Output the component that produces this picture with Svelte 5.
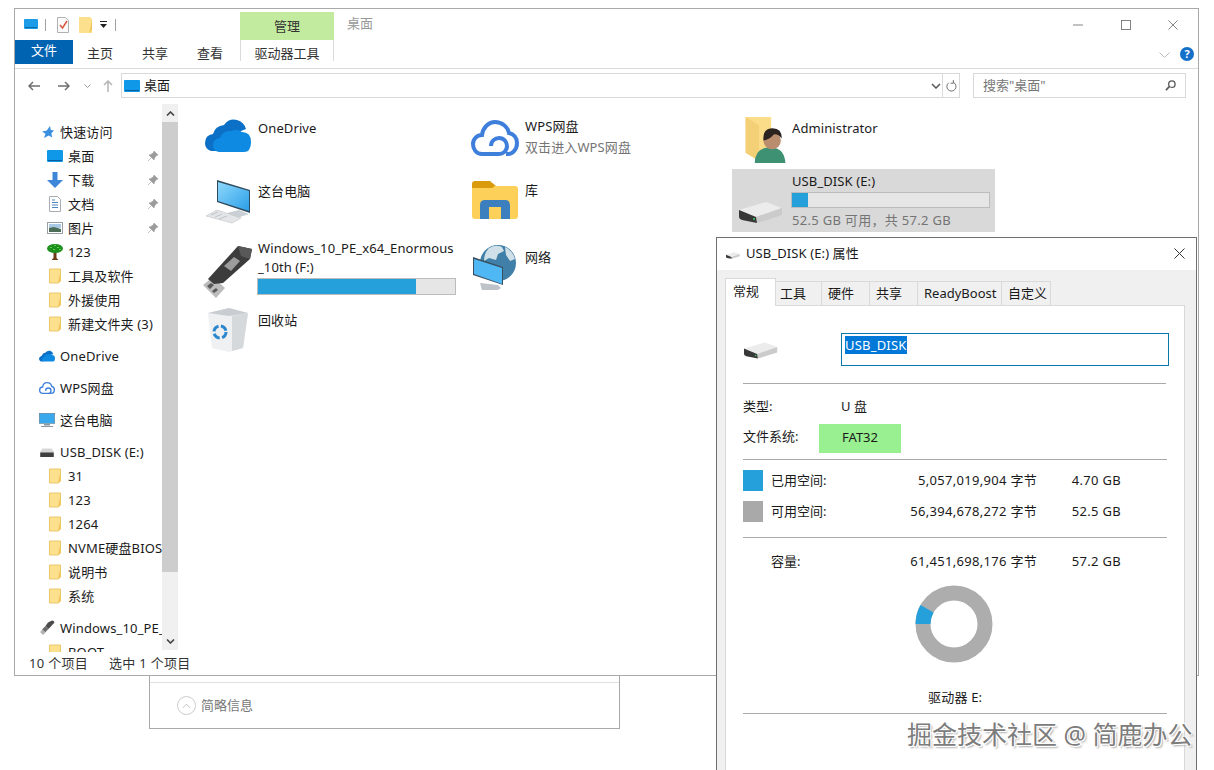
<script>
	const navGroups = [
		[
			{ name: '快速访问', icon: 'star', top: true },
			{ name: '桌面', icon: 'desktop', pin: true },
			{ name: '下载', icon: 'down', pin: true },
			{ name: '文档', icon: 'doc', pin: true },
			{ name: '图片', icon: 'pic', pin: true },
			{ name: '123', icon: 'tree' },
			{ name: '工具及软件', icon: 'folder' },
			{ name: '外援使用', icon: 'folder' },
			{ name: '新建文件夹 (3)', icon: 'folder' }
		],
		[{ name: 'OneDrive', icon: 'onedrive', top: true }],
		[{ name: 'WPS网盘', icon: 'wps', top: true }],
		[{ name: '这台电脑', icon: 'pc', top: true }],
		[
			{ name: 'USB_DISK (E:)', icon: 'drive', top: true },
			{ name: '31', icon: 'folder' },
			{ name: '123', icon: 'folder' },
			{ name: '1264', icon: 'folder' },
			{ name: 'NVME硬盘BIOS', icon: 'folder' },
			{ name: '说明书', icon: 'folder' },
			{ name: '系统', icon: 'folder' }
		],
		[
			{ name: 'Windows_10_PE_x64_Enormous', icon: 'usb', top: true },
			{ name: 'BOOT', icon: 'folder' }
		]
	];

	const tabs = ['常规', '工具', '硬件', '共享', 'ReadyBoost', '自定义'];

	const used = 5057019904;
	const total = 61451698176;
	const radius = 31;
	const circ = 2 * Math.PI * radius;
	const usedLen = (used / total) * circ;

	// CJK glyphs sit a little low in the line box
	const hasCjk = (s) => /[\u4e00-\u9fff]/.test(s);
</script>

{#snippet folder()}
	<svg class="i16" viewBox="0 0 16 16">
		<path d="M2.500 1h11v12l-2 2h-9z" fill="#fde08d" stroke="#ecc868" stroke-width="1" />
		<path d="M11 15l2.500-2V6l-1.500 3z" fill="#f1c65c" />
	</svg>
{/snippet}

{#snippet desktop()}
	<svg class="i16" viewBox="0 0 16 14">
		<rect x="0" y="1" width="16" height="12" rx="1" fill="#0f97e8" />
		<rect x="1" y="11" width="14" height="1" fill="#0a5d99" />
	</svg>
{/snippet}

{#snippet drive(cls)}
	<svg class={cls} viewBox="0 0 44 21">
		<path d="M0 8L27 0l16 6-26 9z" fill="#ececec" />
		<path d="M17 15L43 6v7L18 21z" fill="#cbcbcb" />
		<path d="M0 8l17 7 1 6-15-3q-3-1-3-3z" fill="#383838" />
		<circle cx="15" cy="17" r="1" fill="#3bcf6b" />
	</svg>
{/snippet}

{#snippet wpsCloud(cls)}
	<svg class={cls} viewBox="0 0 48 36">
		<path d="M20 26C20 21 24 18 28 18C33 18 36 22 36 26C36 31 32 34 28 34H11C5 34 2 29 2 24C2 19 6 15 11 15C12 7 18 2 24 2C31 2 37 7 38 13C43 14 46 18 46 23C46 29 42 34 37 34H35" fill="none" stroke="#3f7fdc" stroke-width="4" />
	</svg>
{/snippet}

{#snippet navIcon(name)}
	{#if name === 'star'}
		<svg class="i16" viewBox="0 0 16 16"><path d="M11 2l.8 4 3.200.6-2.600 2.600.8 4.300-3.400-2-4.800 2.500 1.500-4.300L3 7.500l4.800-1z" fill="#3a8ee0" /></svg>
	{:else if name === 'desktop'}
		{@render desktop()}
	{:else if name === 'down'}
		<svg class="i16" viewBox="0 0 16 16"><path d="M5.500 0h5v8H16l-8 8-8-8h5.500z" fill="#3d86d8" /></svg>
	{:else if name === 'doc'}
		<svg class="i16" viewBox="0 0 16 16">
			<path d="M2.500.5h8l3 3v12h-11z" fill="#fff" stroke="#a8adb3" />
			<path d="M5 4h3M5 6.500h6M5 9h6M5 11.500h6" stroke="#4a86c0" stroke-width="1" />
		</svg>
	{:else if name === 'pic'}
		<svg class="i16" viewBox="0 0 16 14">
			<rect x=".5" y="1.500" width="15" height="11" fill="#fff" stroke="#9a9fa6" />
			<rect x="2" y="3" width="12" height="4" fill="#a9c9e4" />
			<path d="M2 7l5-1 7 2v3H2z" fill="#4c6d58" />
		</svg>
	{:else if name === 'tree'}
		<svg class="i16" viewBox="0 0 16 16">
			<path d="M6.500 7h3v7l2 2h-7l2-2z" fill="#6b3a17" />
			<ellipse cx="8" cy="4.500" rx="8" ry="4.500" fill="#1c8f1c" />
			<path d="M3 3h2v1H3zm4-2h2v1H7zm3 2h2v1h-2zM6 5h2v1H6zM12 5h2v1h-2z" fill="#67d04a" />
		</svg>
	{:else if name === 'folder'}
		{@render folder()}
	{:else if name === 'onedrive'}
		<svg class="i16" viewBox="0 0 46 34">
			<path d="M5 33Q0 30 0 25q0-7 8-9 2-8 11-9 5-7 13-5 7 2 9 9l-20 8-8 14z" fill="#0b70c6" />
			<path d="M14 33q-6 0-6-6t7-7q3-8 12-7 4-3 10 1 9 0 9 10 0 9-7 9z" fill="#0f8ae2" />
		</svg>
	{:else if name === 'wps'}
		{@render wpsCloud('i16')}
	{:else if name === 'pc'}
		<svg class="i16" viewBox="0 0 16 14">
			<rect x=".3" y=".3" width="15.400" height="10" fill="#39a9ee" stroke="#5d7a8e" stroke-width=".6" />
			<path d="M5 11h6v1.500H5zM2 13h12v1H2z" fill="#8a97a2" />
		</svg>
	{:else if name === 'drive'}
		<svg class="i16" viewBox="0 0 14 8" style="height:9px"><path d="M1 3l2-2.500h8L13 3v5H1z" fill="#d7d7d7" /><rect x="1" y="4" width="12" height="4" fill="#3f3f3f" /></svg>
	{:else if name === 'usb'}
		<svg class="i16" viewBox="0 0 16 16">
			<path d="M9 2.500l4-2q2 0 2.500 2L9.500 9 6.500 6z" fill="#4b4b4b" />
			<path d="M6.500 6l3 3-3.500 3.500-3-3z" fill="#6c6c6c" />
			<path d="M3.500 9.500l3 3L4 15l-3-3z" fill="#b3b3b3" />
		</svg>
	{/if}
{/snippet}

<div class="back-dialog">
	<div class="back-foot">
		<span class="circle-up">
			<svg viewBox="0 0 10 6" width="9" height="6"><path d="M1 5l4-4 4 4" fill="none" stroke="#bbb" /></svg>
		</span>
		<span class="up2">简略信息</span>
	</div>
</div>

<div class="window">
	<header class="titlebar">
		<div class="qat">
			<svg class="q-desk" viewBox="0 0 14 11"><rect width="14" height="10" rx="1" fill="#1c9be6" /><rect x="1" y="8" width="12" height="1" fill="#0c6cb0" /></svg>
			<span class="q-sep"></span>
			<svg class="q-doc" viewBox="0 0 12 16">
				<path d="M.5.500h8l3 3v12H.5z" fill="#fafafa" stroke="#b0b0b0" />
				<path d="M3 8l2.500 3L10 4" fill="none" stroke="#d8563e" stroke-width="1.500" />
			</svg>
			<svg class="q-folder" viewBox="0 0 13 16"><path d="M0 0h11l2 2v14H0z" fill="#fde08d" /><path d="M10 16l3-3V3z" fill="#f1c65c" /></svg>
			<svg class="q-drop" viewBox="0 0 7 8"><path d="M0 0h7v1H0z" fill="#222" /><path d="M0 3h7L3.500 7z" fill="#222" /></svg>
			<span class="q-sep last"></span>
		</div>
		<div class="context">管理</div>
		<div class="win-title">桌面</div>
		<div class="controls">
			<span class="ctrl"><svg viewBox="0 0 11 11" width="10" height="10"><path d="M0 5.500h11" stroke="#777" /></svg></span>
			<span class="ctrl"><svg viewBox="0 0 11 11" width="10" height="10"><rect x=".5" y=".5" width="10" height="10" fill="none" stroke="#777" /></svg></span>
			<span class="ctrl"><svg viewBox="0 0 11 11" width="10" height="10"><path d="M.5.500l10 10M10.500.5l-10 10" stroke="#777" /></svg></span>
		</div>
	</header>

	<nav class="ribbon">
		<span class="file-tab">文件</span>
		<span class="tab">主页</span>
		<span class="tab">共享</span>
		<span class="tab">查看</span>
		<span class="tool-tab">驱动器工具</span>
		<svg class="collapse" viewBox="0 0 11 6" width="11" height="6"><path d="M.5.500l5 5 5-5" fill="none" stroke="#bbb" /></svg>
		<span class="help">?</span>
	</nav>

	<div class="addr-row">
		<svg class="arrow" viewBox="0 0 12 10" width="12" height="10"><path d="M12 5H1M5 1L1 5l4 4" fill="none" stroke="#6e6e6e" stroke-width="1.500" /></svg>
		<svg class="arrow fwd" viewBox="0 0 12 10" width="12" height="10"><path d="M0 5h11M7 1l4 4-4 4" fill="none" stroke="#6e6e6e" stroke-width="1.500" /></svg>
		<svg class="arrow small" viewBox="0 0 7 4" width="7" height="4"><path d="M.5.500l3 3 3-3" fill="none" stroke="#9a9a9a" /></svg>
		<svg class="arrow up" viewBox="0 0 10 12" width="10" height="12"><path d="M5 12V1M1 5l4-4 4 4" fill="none" stroke="#b5b5b5" stroke-width="1.500" /></svg>
		<div class="addr">
			{@render desktop()}
			<span class="addr-text up2">桌面</span>
			<svg class="addr-drop" viewBox="0 0 10 6" width="10" height="6"><path d="M1 1l4 4 4-4" fill="none" stroke="#555" stroke-width="1.500" /></svg>
			<span class="addr-refresh">
				<svg viewBox="0 0 12 13" width="11" height="12"><path d="M3 3a5 5 0 1 0 5-.5M8 0v3.500H5" fill="none" stroke="#666" /></svg>
			</span>
		</div>
		<div class="search">
			<span class="up2">搜索"桌面"</span>
			<svg viewBox="0 0 12 12" width="11" height="11"><circle cx="7.500" cy="4.500" r="3.500" fill="none" stroke="#555" stroke-width="1.400" /><path d="M5 7l-4 4" stroke="#555" stroke-width="1.800" /></svg>
		</div>
	</div>

	<div class="main">
		<aside class="nav">
			{#each navGroups as group}
				<div class="nav-group">
					{#each group as row}
						<div class="nav-row" class:top={row.top}>
							<span class="nav-icon">{@render navIcon(row.icon)}</span>
							<span class="nav-name" class:up2={hasCjk(row.name)}>{row.name}</span>
							{#if row.pin}
								<svg class="pin" viewBox="0 0 10 10" width="10" height="10"><path d="M6 0l4 4-1.500.5L6.500 7 6 9 1 4l2-.5L5.500 1.500zM3 7L0 10" fill="#9b9b9b" stroke="#9b9b9b" stroke-width=".6" /></svg>
							{/if}
						</div>
					{/each}
				</div>
			{/each}
		</aside>
		<div class="scrollbar">
			<span class="sb-btn"><svg viewBox="0 0 9 5" width="9" height="5"><path d="M1 4.500l3.500-3.500L8 4.500" fill="none" stroke="#444" stroke-width="1.600" /></svg></span>
			<span class="sb-thumb"></span>
			<span class="sb-rest"></span>
			<span class="sb-btn"><svg viewBox="0 0 9 5" width="9" height="5"><path d="M1 .5l3.500 3.500L8 .5" fill="none" stroke="#444" stroke-width="1.600" /></svg></span>
		</div>

		<section class="items">
			<div class="item">
				<svg class="big onedrive" viewBox="0 0 46 34">
					<path d="M6 33Q0 31 0 25q0-8 8-9 2-8 11-9 5-7 13-5 7 2 9 9l-20 8-8 14z" fill="#0b70c6" />
					<path d="M14 34q-6-1-6-7t7-7q3-8 12-7 4-3 10 1 9 0 9 10 0 10-7 10z" fill="#0f8ae2" />
				</svg>
				<div class="label">OneDrive</div>
			</div>
			<div class="item">
				{@render wpsCloud('big wps')}
				<div class="label tight">WPS网盘<small>双击进入WPS网盘</small></div>
			</div>
			<div class="item">
				<svg class="big admin" viewBox="0 0 40 46">
					<path d="M1 1h25v36L15 44 1 36z" fill="#fbdc88" />
					<path d="M1 1l13 8v35L1 36z" fill="#f3cf76" />
					<path d="M10 46q0-13 11-15h8q10 2 11 15z" fill="#3f9173" />
					<circle cx="27" cy="24" r="8.500" fill="#b98d6d" />
					<path d="M18.500 24q-1-12 9-12 9 0 9 10-4-5-8-4-4 5-10 6z" fill="#2a2320" />
				</svg>
				<div class="label">Administrator</div>
			</div>

			<div class="item">
				<svg class="big pc" viewBox="0 0 46 44">
					<defs>
						<linearGradient id="screen" x1="0" y1="0" x2="1" y2="1">
							<stop offset="0" stop-color="#8fd8fb" />
							<stop offset="1" stop-color="#2a9fe8" />
						</linearGradient>
					</defs>
					<path d="M22 33l12-3 10 4-12 4z" fill="#c9cfd4" />
					<path d="M12 0l33 10v23L12 22z" fill="#2f4a5c" />
					<path d="M13 2l31 9v20L13 21z" fill="url(#screen)" />
					<path d="M1 36l11-6 24 8-9 5z" fill="#e3e5e8" stroke="#c2c2c2" stroke-width=".6" />
					<path d="M6 35l7-3M10 37l7-3M14 39l8-3" stroke="#c2c5c8" stroke-width="1" />
				</svg>
				<div class="label">这台电脑</div>
			</div>
			<div class="item">
				<svg class="big lib" viewBox="0 0 46 38">
					<path d="M0 3q0-3 3-3h15l6 5v6H0z" fill="#d99a0b" />
					<path d="M0 7h20l3-2h20q3 0 3 3v27q0 3-3 3H3q-3 0-3-3z" fill="#fdd05a" />
					<path d="M8 38V24q0-5 5-5h20q5 0 5 5v14h-9V26H17v12z" fill="#3b7fbe" />
				</svg>
				<div class="label lib-label">库</div>
			</div>
			<div class="item selected">
				<span class="big drive-wrap">{@render drive('drive-big')}</span>
				<div class="label usage">
					USB_DISK (E:)
					<div class="bar"><span class="fill" style="width: {(used / total) * 100}%"></span></div>
					<small>52.5 GB 可用，共 57.2 GB</small>
				</div>
			</div>

			<div class="item">
				<svg class="big stick" viewBox="0 0 50 55">
					<path d="M0 42l10-8 12 11-9 10z" fill="#bcbcbc" />
					<path d="M4 43l4-3 3 2-4 4zM9 48l4-3 2 2-4 3z" fill="#5a5a5a" />
					<path d="M5 36L35 3l14 3-2 10-27 24-9 1z" fill="#3c3c3c" />
					<path d="M35 3l14 3-2 10-9-3z" fill="#585858" />
					<path d="M21 23l10-9 6 4-9 10z" fill="#9c9c9c" />
				</svg>
				<div class="label two-line">
					Windows_10_PE_x64_Enormous<br />_10th (F:)
					<div class="bar"><span class="fill" style="width: 80%"></span></div>
				</div>
			</div>
			<div class="item">
				<svg class="big net" viewBox="0 0 46 46">
					<circle cx="26" cy="19" r="18" fill="#3f7fa8" />
					<path d="M17 4q7-4 13-1l2 4-6 3-2 6-7-2-5 3q0-8 5-13zM33 3q8 4 10 12l-5 2-4-6z" fill="#cfe0e8" />
					<path d="M8 39l18 2 3 3-3 2H10z" fill="#bdc3c8" />
					<path d="M1 13l30 10v18L1 31z" fill="#3a4f5d" />
					<path d="M2 15l28 9v16L2 30z" fill="#50b7f5" />
				</svg>
				<div class="label low">网络</div>
			</div>
			<div class="item"></div>

			<div class="item">
				<svg class="big bin" viewBox="0 0 40 45">
					<path d="M0 6L21 1l19 5-5 35-14 4-17-4z" fill="#eef0f2" />
					<path d="M0 6L21 1l19 5-19 3z" fill="#c9cdd1" />
					<path d="M24 9l16-3-5 35-11 3z" fill="#d5d9dc" />
					<circle cx="12" cy="25" r="6" fill="none" stroke="#2d87cc" stroke-width="3" stroke-dasharray="7 2.500" />
				</svg>
				<div class="label">回收站</div>
			</div>
		</section>
	</div>

	<footer class="status">
		<span class="up2">10 个项目</span>
		<span class="up2">选中 1 个项目</span>
	</footer>
</div>

<div class="dialog">
	<div class="dlg-title">
		{@render drive('drive-mini')}
		<span class="title-text">USB_DISK (E:) 属性</span>
		<svg class="dlg-close" viewBox="0 0 11 11" width="11" height="11"><path d="M.5.500l10 10M10.500.5l-10 10" stroke="#333" /></svg>
	</div>
	<div class="dlg-tabs">
		{#each tabs as tab, i}
			<span class="dlg-tab" class:active={i === 0}>{tab}</span>
		{/each}
	</div>
	<div class="page">
		<div class="head">
			{@render drive('drive-dlg')}
			<div class="name-input"><span class="sel">USB_DISK</span></div>
		</div>
		<div class="meta">
			<div class="meta-row"><span>类型:</span><span class="meta-val">U 盘</span></div>
			<div class="meta-row fs"><span class="fs-label">文件系统:</span><span class="fat">FAT32</span></div>
		</div>
		<div class="space">
			<div class="space-row">
				<span class="swatch used"></span><span class="sp-label">已用空间:</span>
				<span class="num">5,057,019,904 字节</span><span class="num">4.70 GB</span>
			</div>
			<div class="space-row">
				<span class="swatch free"></span><span class="sp-label">可用空间:</span>
				<span class="num">56,394,678,272 字节</span><span class="num">52.5 GB</span>
			</div>
		</div>
		<div class="capacity">
			<div class="space-row cap">
				<span></span><span class="sp-label">容量:</span>
				<span class="num">61,451,698,176 字节</span><span class="num">57.2 GB</span>
			</div>
			<svg class="donut" viewBox="0 0 78 78" width="78" height="78">
				<circle cx="39" cy="39" r={radius} fill="none" stroke="#adadad" stroke-width="15" />
				<circle cx="39" cy="39" r={radius} fill="none" stroke="#26a0da" stroke-width="15"
					stroke-dasharray="{usedLen} {circ}" transform="rotate(180 39 39)" />
			</svg>
			<div class="drive-name">驱动器 E:</div>
		</div>
	</div>
</div>

<div class="watermark">掘金技术社区 @ 简鹿办公</div>

<style>
	:global(body) {
		background: #fff;
		overflow: hidden;
	}
	:global(#app) {
		position: relative;
		width: 1214px;
		height: 770px;
		overflow: hidden;
		font-family: "Noto Sans", "Noto Sans CJK SC", sans-serif;
		font-size: 13px;
		color: #1a1a1a;
	}
	svg {
		display: block;
		flex-shrink: 0;
	}
	.i16 {
		width: 16px;
		height: 16px;
	}
	.up2 {
		padding-bottom: 2px;
	}

	/* desktop windows */
	.window {
		position: absolute;
		left: 14px;
		top: 8px;
		width: 1185px;
		height: 668px;
		box-sizing: border-box;
		border: 1px solid #a9a9a9;
		background: #fff;
		display: flex;
		flex-direction: column;
	}
	.back-dialog {
		position: absolute;
		left: 149px;
		top: 660px;
		width: 471px;
		height: 69px;
		box-sizing: border-box;
		border: 1px solid #a9a9a9;
		background: #fff;
		display: flex;
		flex-direction: column;
		justify-content: flex-end;
	}
	.back-foot {
		height: 46px;
		box-sizing: border-box;
		border-top: 1px solid #dfdfdf;
		display: flex;
		align-items: center;
		gap: 5px;
		padding-left: 27px;
		color: #777;
	}
	.circle-up {
		width: 17px;
		height: 17px;
		border: 1px solid #ccc;
		border-radius: 50%;
		display: flex;
		align-items: center;
		justify-content: center;
	}

	/* title bar */
	.titlebar {
		height: 31px;
		display: flex;
		flex-shrink: 0;
	}
	.qat {
		width: 225px;
		flex-shrink: 0;
		display: flex;
		align-items: center;
		padding-left: 9px;
		box-sizing: border-box;
	}
	.q-desk {
		width: 14px;
		height: 11px;
	}
	.q-sep {
		width: 1px;
		height: 12px;
		background: #a0a0a0;
		margin: 0 11px 0 7px;
	}
	.q-sep.last {
		margin: 0 0 0 8px;
	}
	.q-doc {
		width: 12px;
		height: 16px;
		margin-right: 10px;
	}
	.q-folder {
		width: 13px;
		height: 16px;
		margin-right: 8px;
	}
	.q-drop {
		width: 7px;
		height: 8px;
	}
	.context {
		width: 94px;
		height: 28px;
		margin-top: 3px;
		background: #c3eb9f;
		text-align: center;
		line-height: 28px;
		color: #333;
		flex-shrink: 0;
	}
	.win-title {
		margin-left: 13px;
		line-height: 28px;
		color: #999;
	}
	.controls {
		margin-left: auto;
		margin-right: 1px;
		display: flex;
	}
	.ctrl {
		width: 47.500px;
		display: flex;
		align-items: center;
		justify-content: center;
	}

	/* ribbon */
	.ribbon {
		height: 29px;
		box-sizing: border-box;
		border-bottom: 1px solid #dadbdc;
		display: flex;
		align-items: flex-start;
		flex-shrink: 0;
	}
	.file-tab {
		width: 58px;
		height: 24px;
		background: #0063b1;
		color: #fff;
		text-align: center;
		line-height: 21px;
		flex-shrink: 0;
	}
	.tab {
		width: 54px;
		height: 24px;
		margin-right: 1px;
		text-align: center;
		line-height: 27px;
		color: #333;
		flex-shrink: 0;
	}
	.tool-tab {
		width: 94px;
		height: 21px;
		margin-left: 2px;
		box-sizing: border-box;
		border: 1px solid #dadbdc;
		border-width: 0 1px;
		text-align: center;
		line-height: 27px;
		color: #333;
		overflow: hidden;
	}
	.collapse {
		margin: 12px 0 0 auto;
	}
	.help {
		width: 14px;
		height: 14px;
		margin: 7px 4px 0 10px;
		border-radius: 50%;
		background: #1470c8;
		color: #fff;
		font-size: 11px;
		font-weight: 700;
		line-height: 14px;
		text-align: center;
	}

	/* address row */
	.addr-row {
		height: 35px;
		display: flex;
		align-items: center;
		padding-bottom: 2px;
		box-sizing: border-box;
		flex-shrink: 0;
	}
	.arrow {
		margin-left: 13px;
	}
	.arrow.fwd {
		margin-left: 18px;
	}
	.arrow.small {
		margin-left: 14px;
	}
	.arrow.up {
		margin-left: 12px;
	}
	.addr {
		width: 839px;
		height: 25px;
		margin-left: 8px;
		box-sizing: border-box;
		border: 1px solid #d9d9d9;
		display: flex;
		align-items: center;
		padding-left: 2px;
	}
	.addr-text {
		margin-left: 4px;
	}
	.addr-drop {
		margin-left: auto;
	}
	.addr-refresh {
		margin-left: 1px;
		height: 23px;
		width: 16px;
		border-left: 1px solid #d9d9d9;
		display: flex;
		align-items: center;
		justify-content: center;
	}
	.search {
		width: 213px;
		height: 25px;
		margin-left: 13px;
		box-sizing: border-box;
		border: 1px solid #d9d9d9;
		display: flex;
		align-items: center;
		justify-content: space-between;
		padding: 0 9px;
		color: #777;
	}

	/* main area */
	.main {
		flex: 1;
		min-height: 0;
		display: flex;
	}
	.nav {
		width: 147px;
		flex-shrink: 0;
		overflow: hidden;
		padding-top: 16px;
		box-sizing: border-box;
	}
	.nav-group {
		margin-bottom: 8px;
	}
	.nav-row {
		height: 24px;
		display: flex;
		align-items: center;
		padding-left: 32px;
		padding-right: 4px;
		white-space: nowrap;
	}
	.nav-row.top {
		padding-left: 24px;
	}
	.nav-icon {
		width: 16px;
		height: 16px;
		display: flex;
		align-items: center;
		flex-shrink: 0;
	}
	.nav-name {
		margin-left: 5px;
		flex-shrink: 0;
		letter-spacing: 0.15px;
	}
	.pin {
		margin-left: auto;
	}
	.scrollbar {
		width: 16px;
		flex-shrink: 0;
		background: #f0f0f0;
		display: flex;
		flex-direction: column;
		height: 546px;
	}
	.sb-btn {
		height: 18px;
		display: flex;
		align-items: center;
		justify-content: center;
		flex-shrink: 0;
	}
	.sb-thumb {
		height: 450px;
		background: #cdcdcd;
	}
	.sb-rest {
		flex: 1;
	}

	/* items */
	.items {
		flex: 1;
		display: grid;
		grid-template-columns: repeat(3, 263px);
		grid-template-rows: 63px 63px 66px 63px;
		column-gap: 4px;
		padding: 2px 0 0 20px;
		align-content: start;
	}
	.item {
		display: flex;
		align-items: flex-start;
		position: relative;
	}
	.item.selected {
		background: #d9d9d9;
	}
	.big {
		position: absolute;
	}
	:global(.wps) {
		position: absolute;
		left: 6px;
		top: 14px;
		width: 48px;
		height: 36px;
	}
	.onedrive {
		left: 7px;
		top: 12px;
		width: 46px;
		height: 34px;
	}
	.admin {
		left: 12px;
		top: 10px;
		width: 42px;
		height: 47px;
	}
	.pc {
		left: 7px;
		top: 11px;
		width: 46px;
		height: 44px;
	}
	.lib {
		left: 7px;
		top: 12px;
		width: 46px;
		height: 38px;
	}
	.drive-wrap {
		left: 7px;
		top: 33px;
	}
	.drive-wrap :global(svg) {
		width: 44px;
		height: 21px;
	}
	.stick {
		left: 5px;
		top: 11px;
		width: 50px;
		height: 55px;
	}
	.net {
		left: 7px;
		top: 12px;
		width: 46px;
		height: 46px;
	}
	.bin {
		left: 10px;
		top: 9px;
		width: 40px;
		height: 45px;
	}
	.label {
		margin-left: 60px;
		padding-top: 13px;
		line-height: 18px;
		white-space: nowrap;
		letter-spacing: 0.1px;
	}
	.label small {
		display: block;
		font-size: 13px;
		color: #747474;
		margin-top: 2px;
	}
	.label.tight {
		padding-top: 11px;
	}
	.label.tight small {
		margin-top: 3px;
	}
	.label.low {
		padding-top: 16px;
	}
	.label.lib-label {
		padding-top: 12px;
	}
	.label.usage {
		padding-top: 3px;
	}
	.label.usage small {
		margin-top: 3px;
		letter-spacing: 0.3px;
	}
	.label.two-line {
		padding-top: 7px;
		line-height: 19px;
	}
	.bar {
		width: 199px;
		height: 17px;
		box-sizing: border-box;
		margin: 1px 0 0 -1px;
		border: 1px solid #bcbcbc;
		background: #e6e6e6;
		display: flex;
	}
	.usage .bar {
		height: 16px;
		margin-top: 2px;
	}
	.fill {
		background: #26a0da;
		display: block;
	}
	.status {
		height: 23px;
		display: flex;
		gap: 21px;
		align-items: center;
		padding-left: 14px;
		flex-shrink: 0;
		color: #333;
		letter-spacing: 0.3px;
	}

	/* properties dialog */
	.dialog {
		position: absolute;
		left: 716px;
		top: 237px;
		width: 481px;
		height: 560px;
		box-sizing: border-box;
		border: 1px solid #6f6f6f;
		background: #f0f0f0;
	}
	.dlg-title {
		height: 32px;
		background: #fff;
		display: flex;
		align-items: center;
		padding-left: 9px;
		gap: 6px;
	}
	.title-text {
		padding-bottom: 3px;
		letter-spacing: 0.1px;
	}
	.drive-mini {
		width: 14px;
		height: 7px;
		margin-top: 2px;
	}
	.dlg-close {
		margin: 0 11px 2px auto;
	}
	.dlg-tabs {
		display: flex;
		align-items: flex-end;
		height: 36px;
		padding-left: 8px;
		position: relative;
		z-index: 1;
		margin-bottom: -1px;
	}
	.dlg-tab {
		height: 25px;
		box-sizing: border-box;
		padding: 0 0 2px 6px;
		border: 1px solid #d9d9d9;
		border-left: 0;
		background: #f0f0f0;
		display: flex;
		align-items: center;
		width: 48px;
		white-space: nowrap;
	}
	.dlg-tab.active {
		height: 28px;
		width: 51px;
		padding: 0 0 5px 7px;
		border-left: 1px solid #d9d9d9;
		border-bottom: 0;
		background: #fff;
	}
	.dlg-tab:nth-child(2) {
		width: 46px;
		padding-left: 4px;
	}
	.dlg-tab:nth-child(5) {
		width: 84px;
	}
	.dlg-tab:nth-child(6) {
		width: 49px;
	}
	.page {
		margin-left: 8px;
		width: 460px;
		height: 480px;
		box-sizing: border-box;
		border: 1px solid #d9d9d9;
		background: #fff;
		padding: 0 17px;
	}
	.head {
		height: 78px;
		box-sizing: border-box;
		padding-top: 27px;
		border-bottom: 1px solid #a9a9a9;
		display: flex;
		align-items: flex-start;
		width: 423px;
	}
	.drive-dlg {
		width: 34px;
		height: 17px;
		margin: 9px 0 0 1px;
	}
	.name-input {
		width: 328px;
		height: 33px;
		margin-left: 63px;
		flex-shrink: 0;
		box-sizing: border-box;
		border: 1px solid #0a78a8;
		padding: 2px 0 0 3px;
		display: flex;
		align-items: flex-start;
	}
	.sel {
		background: #0078d7;
		color: #fff;
		line-height: 18px;
		letter-spacing: 0.2px;
	}
	.meta {
		height: 76px;
		box-sizing: border-box;
		padding-top: 6px;
		border-bottom: 1px solid #a9a9a9;
	}
	.meta-row {
		display: grid;
		grid-template-columns: 76px auto;
		align-items: center;
		height: 30px;
	}
	.meta-row.fs {
		height: 29px;
		margin-top: 4px;
		align-items: start;
	}
	.fs-label {
		line-height: 25px;
	}
	.meta-val {
		padding-left: 22px;
	}
	.fat {
		width: 82px;
		height: 29px;
		background: #98f090;
		text-align: center;
		line-height: 27px;
	}
	.space {
		height: 78px;
		box-sizing: border-box;
		padding-top: 10px;
		border-bottom: 1px solid #a9a9a9;
	}
	.space-row {
		display: grid;
		grid-template-columns: 20px 130px 144px 84px;
		align-items: center;
		height: 21px;
		margin-bottom: 10px;
	}
	.swatch {
		height: 21px;
	}
	.swatch.used {
		background: #26a0da;
	}
	.swatch.free {
		background: #a9a9a9;
	}
	.sp-label {
		padding: 0 0 2px 8px;
	}
	.num {
		text-align: right;
		white-space: nowrap;
		padding-bottom: 2px;
		letter-spacing: 0.3px;
	}
	.capacity {
		height: 176px;
		box-sizing: border-box;
		padding-top: 13px;
		border-bottom: 1px solid #a9a9a9;
	}
	.space-row.cap {
		margin-bottom: 13px;
	}
	.donut {
		margin: 0 0 0 172px;
	}
	.drive-name {
		margin: 24px 0 0 185px;
		letter-spacing: 0.2px;
	}
	.watermark {
		position: absolute;
		left: 907px;
		top: 717px;
		font-size: 25px;
		line-height: 34px;
		white-space: nowrap;
		color: #7c7c7c;
		text-shadow: 1px 1px 0 #fff, -1px -1px 0 #fff, 1px -1px 0 #fff, -1px 1px 0 #fff, 2px 2px 2px #aaa;
	}
</style>
